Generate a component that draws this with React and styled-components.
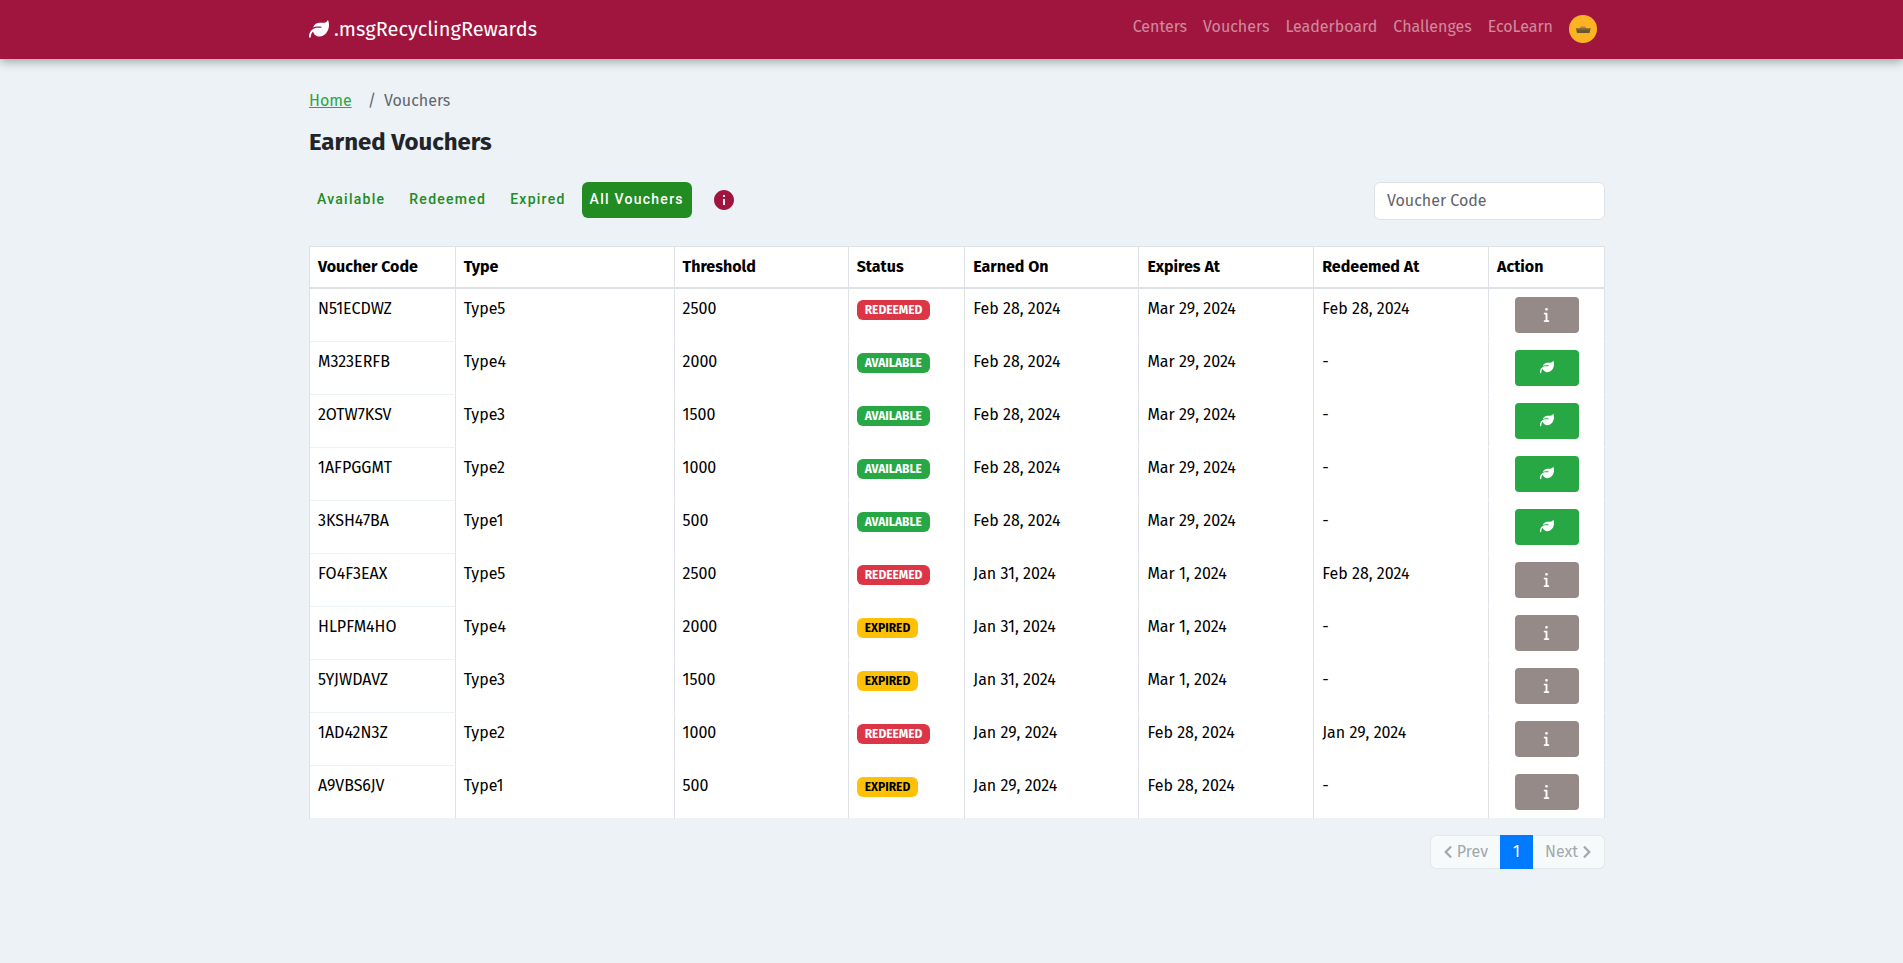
import React, { useState } from 'react'
import styled, { createGlobalStyle } from 'styled-components';
import { FaChevronLeft, FaChevronRight } from 'react-icons/fa';
import { FaLeaf, FaInfo } from 'react-icons/fa6';
import { MdInfo } from 'react-icons/md';


const vouchers = [
    { code: 'N51ECDWZ', type: 'Type5', threshold: 2500, status: 'REDEEMED', earned: 'Feb 28, 2024', expires: 'Mar 29, 2024', redeemed: 'Feb 28, 2024' },
    { code: 'M323ERFB', type: 'Type4', threshold: 2000, status: 'AVAILABLE', earned: 'Feb 28, 2024', expires: 'Mar 29, 2024', redeemed: '-' },
    { code: '2OTW7KSV', type: 'Type3', threshold: 1500, status: 'AVAILABLE', earned: 'Feb 28, 2024', expires: 'Mar 29, 2024', redeemed: '-' },
    { code: '1AFPGGMT', type: 'Type2', threshold: 1000, status: 'AVAILABLE', earned: 'Feb 28, 2024', expires: 'Mar 29, 2024', redeemed: '-' },
    { code: '3KSH47BA', type: 'Type1', threshold: 500, status: 'AVAILABLE', earned: 'Feb 28, 2024', expires: 'Mar 29, 2024', redeemed: '-' },
    { code: 'FO4F3EAX', type: 'Type5', threshold: 2500, status: 'REDEEMED', earned: 'Jan 31, 2024', expires: 'Mar 1, 2024', redeemed: 'Feb 28, 2024' },
    { code: 'HLPFM4HO', type: 'Type4', threshold: 2000, status: 'EXPIRED', earned: 'Jan 31, 2024', expires: 'Mar 1, 2024', redeemed: '-' },
    { code: '5YJWDAVZ', type: 'Type3', threshold: 1500, status: 'EXPIRED', earned: 'Jan 31, 2024', expires: 'Mar 1, 2024', redeemed: '-' },
    { code: '1AD42N3Z', type: 'Type2', threshold: 1000, status: 'REDEEMED', earned: 'Jan 29, 2024', expires: 'Feb 28, 2024', redeemed: 'Jan 29, 2024' },
    { code: 'A9VBS6JV', type: 'Type1', threshold: 500, status: 'EXPIRED', earned: 'Jan 29, 2024', expires: 'Feb 28, 2024', redeemed: '-' },
];

const columns = [
    { title: 'Voucher Code', width: '11.25%' },
    { title: 'Type', width: '16.9%' },
    { title: 'Threshold', width: '13.45%' },
    { title: 'Status', width: '9%' },
    { title: 'Earned On', width: '13.45%' },
    { title: 'Expires At', width: '13.5%' },
    { title: 'Redeemed At', width: '13.5%' },
    { title: 'Action', width: '8.95%' },
];

const links = ['Centers', 'Vouchers', 'Leaderboard', 'Challenges', 'EcoLearn'];
const filters = ['Available', 'Redeemed', 'Expired', 'All Vouchers'];

const badgeColors = {
    REDEEMED: '#dc3545',
    AVAILABLE: '#28a745',
    EXPIRED: '#ffc107',
};


export const App = () => {
    const [filter, setFilter] = useState('All Vouchers');
    const [search, setSearch] = useState('');

    const rows = vouchers.filter((v) =>
        (filter === 'All Vouchers' || v.status === filter.toUpperCase()) &&
        v.code.includes(search.toUpperCase())
    );

    return (
        <>
            <GlobalStyle />
            <Header>
                <HeaderInner>
                    <Brand href="#">
                        <FaLeaf size={20} />
                        .msgRecyclingRewards
                    </Brand>
                    <Nav>
                        {links.map((link) => (
                            <NavLink key={link} href="#">{link}</NavLink>
                        ))}
                        <Avatar aria-label="Profile">
                            <svg width="28" height="28" viewBox="0 0 28 28">
                                <circle cx="14" cy="14" r="14" fill="#fbb324" />
                                <path d="M10 14l2-2.400h4l2 2.400z" fill="#a8864a" />
                                <path d="M7 13.500h14.500l-1 4.500H8z" fill="#6b572d" />
                                <path d="M7 13.500h14.500v1.200H7z" fill="#8b6d33" />
                            </svg>
                        </Avatar>
                    </Nav>
                </HeaderInner>
            </Header>
            <Main>
                <Breadcrumb aria-label="breadcrumb">
                    <HomeLink href="#">Home</HomeLink>
                    <span>/</span>
                    <span>Vouchers</span>
                </Breadcrumb>
                <Title>Earned Vouchers</Title>
                <Toolbar>
                    <Filters>
                        {filters.map((name) => (
                            <FilterButton key={name} $active={name === filter} onClick={() => setFilter(name)}>
                                {name}
                            </FilterButton>
                        ))}
                        <InfoButton aria-label="About vouchers">
                            <MdInfo size={24} />
                        </InfoButton>
                    </Filters>
                    <SearchInput
                        aria-label="Voucher Code"
                        placeholder="Voucher Code"
                        value={search}
                        onChange={(e) => setSearch(e.target.value)}
                    />
                </Toolbar>
                <Table>
                    <colgroup>
                        {columns.map((col) => (
                            <Col key={col.title} $width={col.width} />
                        ))}
                    </colgroup>
                    <thead>
                        <tr>
                            {columns.map((col) => (
                                <Th key={col.title}>{col.title}</Th>
                            ))}
                        </tr>
                    </thead>
                    <tbody>
                        {rows.map((v) => (
                            <Row key={v.code}>
                                <Td>{v.code}</Td>
                                <Td>{v.type}</Td>
                                <Td>{v.threshold}</Td>
                                <Td><Badge $status={v.status}>{v.status}</Badge></Td>
                                <Td>{v.earned}</Td>
                                <Td>{v.expires}</Td>
                                <Td>{v.redeemed}</Td>
                                <Td>
                                    {v.status === 'AVAILABLE' ? (
                                        <ActionButton $green aria-label="Redeem"><FaLeaf size={14} /></ActionButton>
                                    ) : (
                                        <ActionButton aria-label="Details"><FaInfo size={15} /></ActionButton>
                                    )}
                                </Td>
                            </Row>
                        ))}
                    </tbody>
                </Table>
                <Pagination aria-label="Pages">
                    <PageButton disabled><FaChevronLeft />Prev</PageButton>
                    <PageButton $active>1</PageButton>
                    <PageButton disabled>Next<FaChevronRight /></PageButton>
                </Pagination>
            </Main>
        </>
    );
};

export default App;

const GlobalStyle = createGlobalStyle`
* {
  box-sizing: border-box;
}
body {
  margin: 0;
  background-color: #ecf2f6;
  color: #212529;
  font-family: "Fira Sans", Roboto, sans-serif;
  font-size: 16px;
  line-height: 24px;
}
button, input {
  font: inherit;
}
button {
  cursor: pointer;
}
`;

const Header = styled.header`
padding-left: 11px;
background-color: #a0153e;
box-shadow: 0 2px 10px rgba(0, 30, 20, 0.4);
`;

const HeaderInner = styled.div`
display: flex;
justify-content: space-between;
align-items: center;
max-width: 1320px;
height: 59px;
margin: 0 auto;
padding: 0 12px 2px;
`;

const Brand = styled.a`
display: flex;
align-items: center;
gap: 5px;
color: white;
font-size: 20px;
text-decoration: none;
`;

const Nav = styled.nav`
display: flex;
align-items: center;
gap: 16px;
padding-right: 8px;
`;

const NavLink = styled.a`
padding-bottom: 4px;
color: rgba(255, 255, 255, 0.5);
text-decoration: none;
`;

const Avatar = styled.button`
display: flex;
padding: 0;
border: none;
background: none;
`;

const Main = styled.main`
width: 100%;
max-width: 1331px;
margin: 0 auto;
padding: 30px 12px 0 23px;
`;

const Breadcrumb = styled.nav`
display: flex;
gap: 8px;
color: #5f676e;
`;

const HomeLink = styled.a`
margin-right: 8px;
color: #28a745;
`;

const Title = styled.h1`
margin: 13px 0 24px;
font-size: 24px;
line-height: 32px;
font-weight: 700;
`;

const Toolbar = styled.div`
display: flex;
justify-content: space-between;
align-items: flex-start;
`;

const Filters = styled.div`
display: flex;
align-items: center;
gap: 8px;
`;

const FilterButton = styled.button`
height: 36px;
padding: 0 8px 2px;
border: none;
border-radius: 6px;
background-color: ${(props) => (props.$active ? '#228b22' : 'transparent')};
color: ${(props) => (props.$active ? 'white' : '#228b22')};
font-family: Roboto, sans-serif;
font-size: 14px;
font-weight: 500;
letter-spacing: 0.09em;
`;

const InfoButton = styled.button`
display: flex;
margin-left: 12px;
padding: 0;
border: none;
background: none;
color: #a0153e;
`;

const SearchInput = styled.input`
width: 231px;
height: 38px;
padding: 0 12px 2px;
border: 1px solid #dee2e6;
border-radius: 6px;
background-color: white;
color: #212529;

&::placeholder {
  color: #5f6468;
  opacity: 1;
}
`;

const Table = styled.table`
width: 100%;
margin-top: 26px;
table-layout: fixed;
border-collapse: separate;
border-spacing: 0;
border-left: 1px solid #dee2e6;
color: black;
`;

const Col = styled.col`
width: ${(props) => props.$width};
`;

const Th = styled.th`
padding: 8px;
border: 1px solid #dee2e6;
border-width: 1px 1px 2px 0;
background-color: white;
text-align: left;
font-weight: 700;
`;

const Td = styled.td`
height: 53px;
padding: 8px;
border-right: 1px solid #dee2e6;
border-bottom: 1px solid white;
background-color: white;
vertical-align: top;

&:first-child {
  border-bottom-color: #ecf2f6;
}
`;

const Row = styled.tr`
&:last-child ${Td} {
  border-bottom-color: #ecf2f6;
}
`;

const Badge = styled.span`
display: block;
width: fit-content;
margin-top: 3px;
padding: 0 8px;
border-radius: 6px;
background-color: ${(props) => badgeColors[props.$status]};
color: ${(props) => (props.$status === 'EXPIRED' ? 'black' : 'white')};
font-size: 12px;
line-height: 20px;
font-weight: 700;
`;

const ActionButton = styled.button`
display: flex;
justify-content: center;
align-items: center;
width: 64px;
height: 36px;
margin: 0 auto;
padding: 0 0 2px;
border: none;
border-radius: 4px;
background-color: ${(props) => (props.$green ? '#28a745' : '#958a88')};
color: white;
`;

const Pagination = styled.nav`
display: flex;
justify-content: flex-end;
margin-top: 16px;
`;

const PageButton = styled.button`
display: flex;
align-items: center;
gap: 4px;
height: 34px;
padding: 0 12px;
border: 1px solid ${(props) => (props.$active ? '#007bff' : '#e4e8eb')};
background-color: ${(props) => (props.$active ? '#007bff' : '#f6fafb')};
color: ${(props) => (props.$active ? 'white' : '#a3a8ac')};

svg {
  width: 10px;
  height: 14px;
}
&:first-child {
  border-right: none;
  border-radius: 6px 0 0 6px;
}
&:last-child {
  border-left: none;
  border-radius: 0 6px 6px 0;
}
`;
